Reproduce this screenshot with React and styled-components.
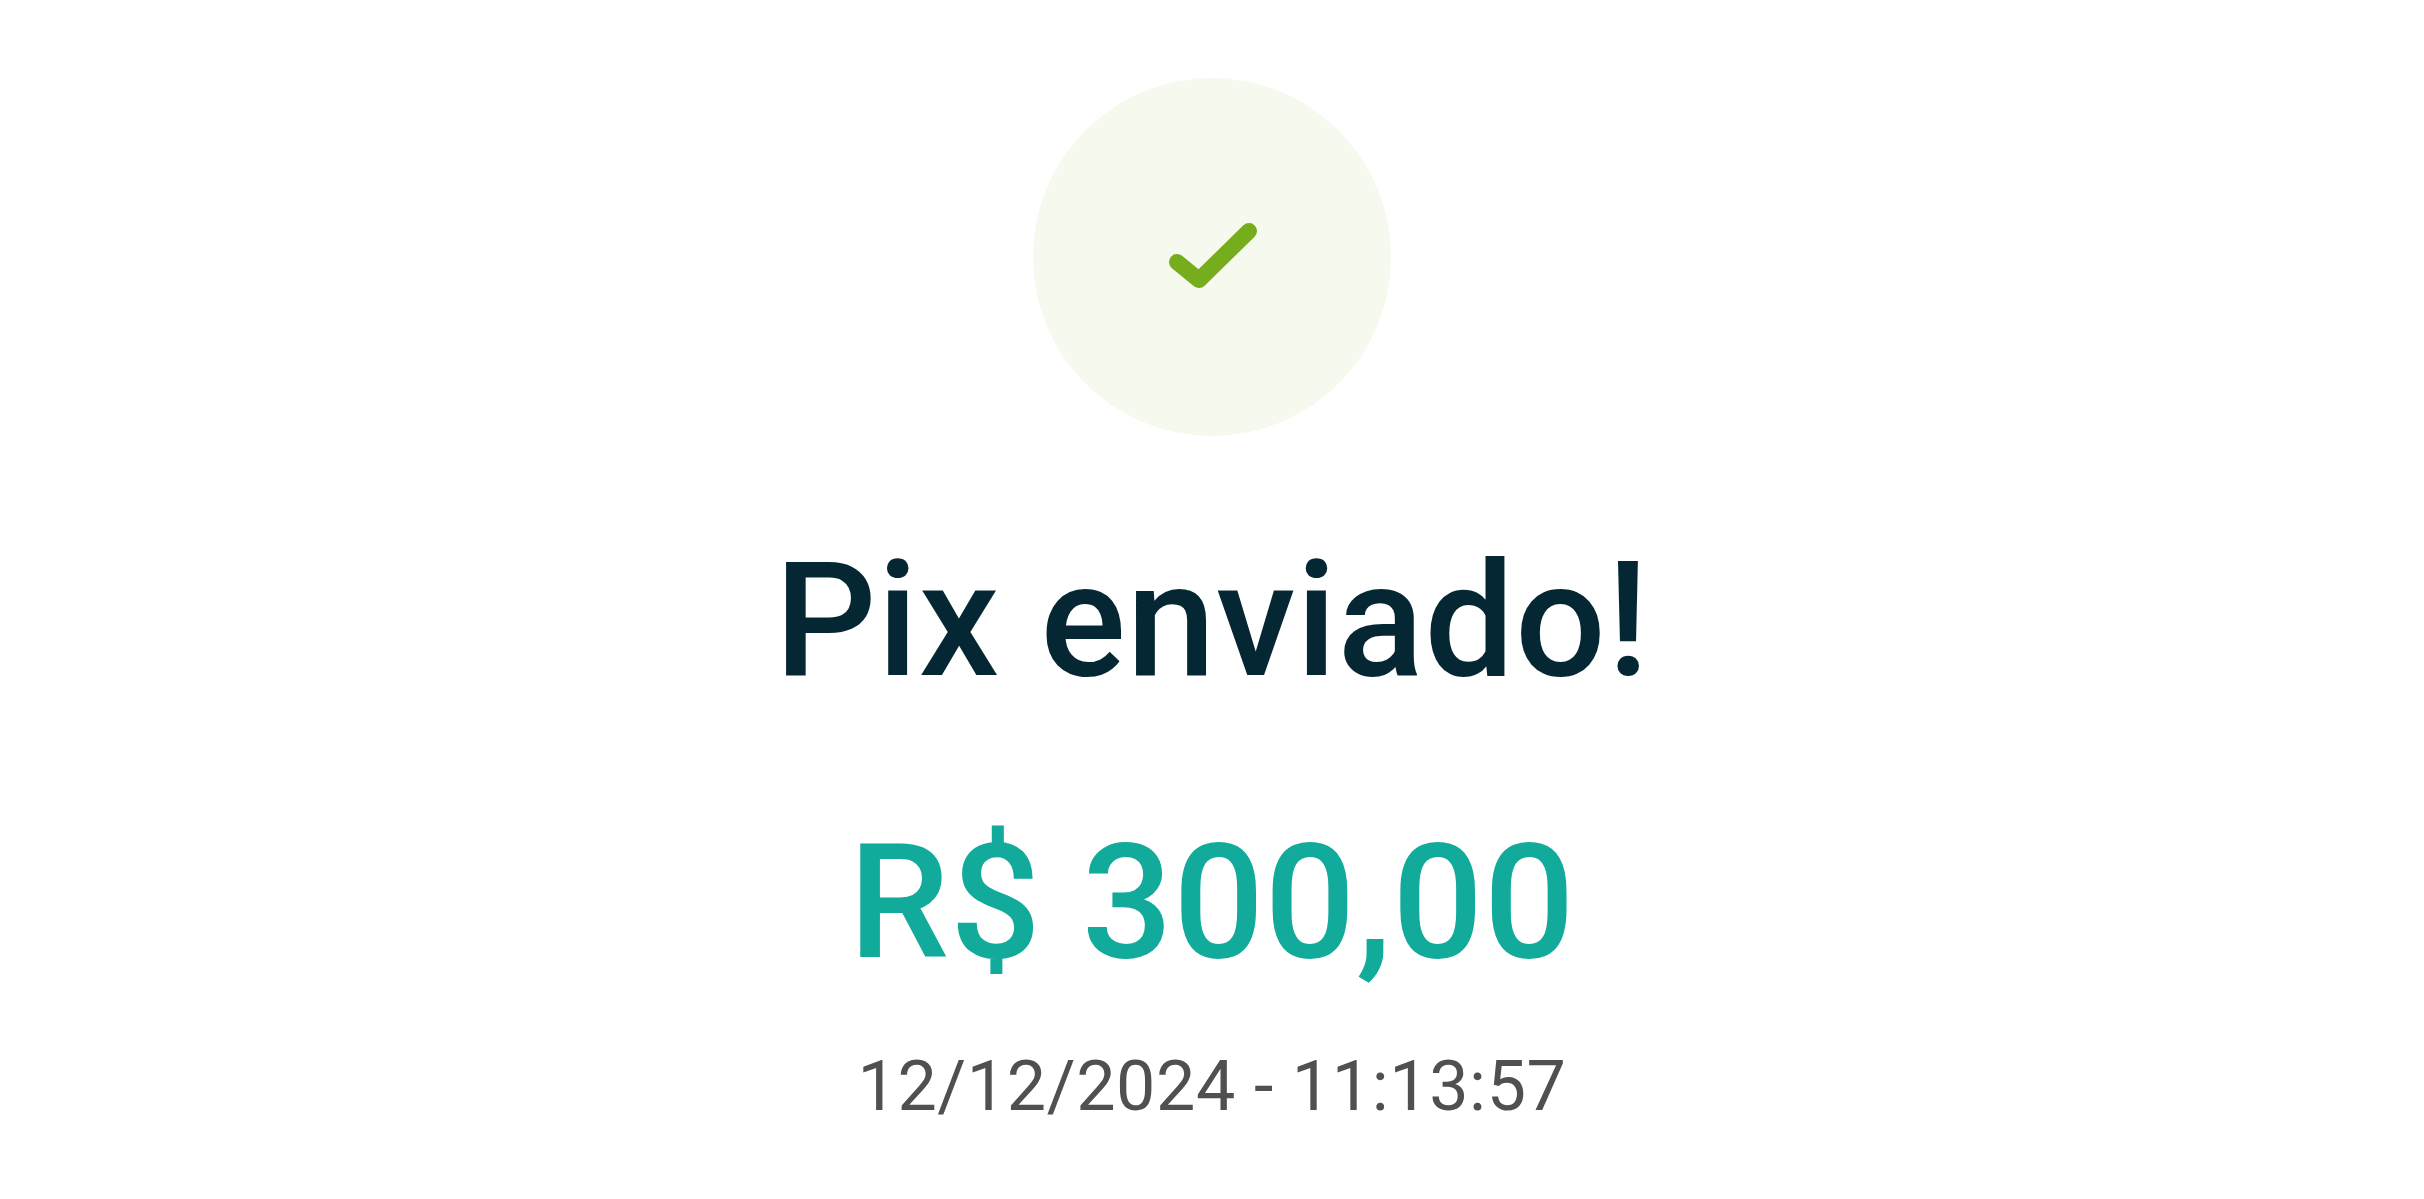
import React from "react";
import styled, { createGlobalStyle } from "styled-components";

const Global = createGlobalStyle`
  html, body { margin: 0; padding: 0; background: #fff; }
  #root { width: 100%; }
`;
const Page = styled.main`
  width: 2424px; height: 1199px; overflow: hidden;
  display: flex; flex-direction: column; align-items: center;
  padding-top: 78px; box-sizing: border-box;
  font-family: Roboto, "Noto Sans", sans-serif;
`;
const Badge = styled.div`
  width: 358px; height: 358px; border-radius: 50%; background: #f5f9ee;
  display: flex; align-items: center; justify-content: center;
`;
const Title = styled.h1`
  margin: 91px 0 0; font-size: 160px; line-height: 188px; font-weight: 500;
  color: #052733; white-space: nowrap; letter-spacing: 0.6px;
`;
const Amount = styled.div`
  margin-top: 94px; font-size: 160px; line-height: 188px; font-weight: 500;
  color: #12aa9a; white-space: nowrap; letter-spacing: 0.5px;
`;
const Stamp = styled.div`
  margin-top: 48px; font-size: 70px; line-height: 82px; font-weight: 400;
  color: #505050; white-space: nowrap; letter-spacing: 0.6px;
`;
export default function App() {
  return (
    <Page>
      <Global />
      <Badge>
        <svg width="100" height="100" viewBox="0 0 100 100" fill="none">
          <path d="M15 55 L37 73 L87 24" stroke="#76ad1c" strokeWidth="16" strokeLinecap="round" strokeLinejoin="round" />
        </svg>
      </Badge>
      <Title>Pix enviado!</Title>
      <Amount>R$ 300,00</Amount>
      <Stamp>12/12/2024 - 11:13:57</Stamp>
    </Page>
  );
}
